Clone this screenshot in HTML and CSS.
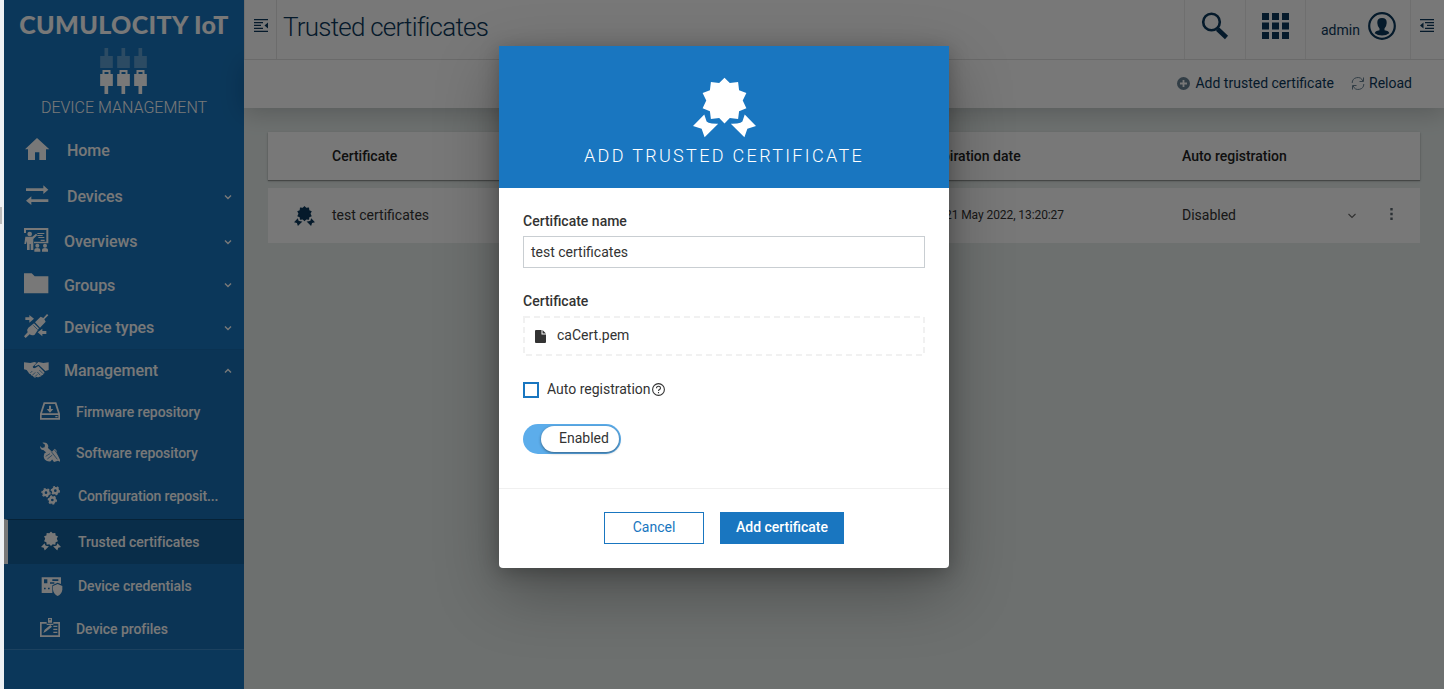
FILE: index.html
```html
<!DOCTYPE html>
<html lang="en">
<head>
<meta charset="utf-8">
<title>Trusted certificates</title>
<link rel="stylesheet" href="styles.css">
</head>
<body>
<svg class="defs" width="0" height="0">
  <symbol id="badge" viewBox="580 110 190 182">
    <path d="M675 111l16 16 25-3 3 25 22 8-11 23 11 23-22 9-3 24-25-3-16 16-16-16-25 3-3-24-22-9 11-23-11-23 22-8 3-25 25 3z"/>
    <path d="M614 222l-34 35 26 8 9 26 41-41q-37 1-37-13zM736 222l34 35-26 8-9 26-41-41q37 1 37-13z"/>
  </symbol>
  <symbol id="down" viewBox="0 0 8 8"><path d="M1 2.5l3 3 3-3" fill="none" stroke="currentColor" stroke-width="1.4"/></symbol>
</svg>
<div class="app">
  <aside class="edge"><span class="edge-mark"></span></aside>
  <nav class="sidebar">
    <div class="brand">
      <div class="brand-name">CUMULOCITY IoT</div>
      <svg class="plugs" viewBox="303 144 140 138">
        <path opacity=".3" d="M316 144h11v24h14v36h-38v-36h13zM367 144h11v24h14v36h-38v-36h13zM418 144h11v24h14v36h-38v-36h13z"/>
        <path fill-rule="evenodd" d="M310 210h24v12h7v36h-14v24h-11v-24h-13v-36h7zm6 6v6h12v-6zM361 210h24v12h7v36h-14v24h-11v-24h-13v-36h7zm6 6v6h12v-6zM412 210h24v12h7v36h-14v24h-11v-24h-13v-36h7zm6 6v6h12v-6z"/>
      </svg>
      <div class="brand-app">DEVICE MANAGEMENT</div>
    </div>
    <a class="item h46 wide"><svg class="ico" viewBox="66 411 84 84"><path d="M111 414l37 34h-10v32h-20v-23h-13v23H84v-32h-9z"/></svg><span>Home</span></a>
    <a class="item h46 wide"><svg class="ico" viewBox="66 39 84 84"><path d="M78 55h52v-9l15 13-15 13v-9H78zM145 88H94v-9L78 92l16 13v-9h51z"/></svg><span>Devices</span><svg class="chev"><use href="#down"/></svg></a>
    <a class="item h44"><svg class="ico" viewBox="66 174 84 84"><path d="M72 174h73v46h-43v-5h37v-35H78v9h-6z"/><circle cx="89" cy="192" r="7"/><path d="M76 200h21l11-9 4 4-12 12v33h-8v-18h-3v18h-8v-27l-3 9h-5zM112 189h21v3h-21zM112 195h16v3h-16zM115 201h18v3h-18zM122 209h12v4h-12z"/><circle cx="112" cy="227" r="6"/><circle cx="135" cy="227" r="6"/><path d="M103 245v-5q0-6 9-6t9 6v5zM126 245v-5q0-6 9-6t9 6v5z"/></svg><span>Overviews</span><svg class="chev"><use href="#down"/></svg></a>
    <a class="item h43"><svg class="ico" viewBox="66 305 84 84"><path d="M72 309h23l9 9h41v51H72z"/></svg><span>Groups</span><svg class="chev"><use href="#down"/></svg></a>
    <a class="item h42"><svg class="ico" viewBox="66 432 84 84"><path d="M76 442h12v-7l14 11-14 12v-8H76zM139 483h-12v-7l-14 11 14 12v-7h12zM141 432l4 4-12 12 4 7-17 18-15-16 17-17 8 4zM102 460l15 15-13 19q-8 4-15-1l-12 11-5-5 11-12q-4-8 2-14z"/><path class="cut" d="M100 466l13 13"/></svg><span>Device types</span><svg class="chev"><use href="#down"/></svg></a>
    <div class="open">
      <a class="item h43"><svg class="ico" viewBox="66 34 84 84"><path d="M72 50l19 2 12-3 7 2-12 12q1 7 9 3l8-5 18 18q2 5-3 5 1 5-5 5-1 5-7 4-4 4-8 0l-5 3q-5-1-6-5-6 0-7-5-6-1-7-6l-5-7-8-2zM146 50v23l-10 3-20-19-10 5q-4-1 0-5l9-8 15 3z"/><path class="cut" d="M91 82l6-6M97 89l9-9M105 93l7-7M118 73l11 11M112 79l9 10"/></svg><span>Management</span><svg class="chev up"><use href="#down"/></svg></a>
      <a class="item sub h41"><svg class="ico" viewBox="114 160 84 84"><path fill-rule="evenodd" d="M131 170h38l11 34v18h-60v-18zm4 5l-9 28h48l-9-28zM125 208v9h50v-9z"/><path d="M147 180h6v10h7l-10 11-10-11h7zM166 211h7v4h-7z"/></svg><span>Firmware repository</span></a>
      <a class="item sub h41"><svg class="ico" viewBox="114 283 84 84"><path d="M127 291q15-2 18 10l-1 6 12 11 8-9 5 5 3 12 8 16v6l-6-3-12 4-17-23-15-13q-9 1-10-12l6 6 8-2 1-8zM134 322l9-3 17 18-8 10q-10 2-17-5-7-8-1-20z"/><path class="cut" d="M137 332l13-8M142 340l15-12M154 318l18 23M163 312l11 15"/></svg><span>Software repository</span></a>
      <a class="item sub shift h45"><svg class="ico" viewBox="114 412 84 84"><g fill="none" stroke="currentColor"><g stroke-width="7"><circle cx="138" cy="441" r="7.5"/><circle cx="166" cy="435" r="7.5"/><circle cx="157" cy="463" r="7.5"/></g><g stroke-width="4" stroke-dasharray="6 6"><circle cx="138" cy="441" r="12"/><circle cx="166" cy="435" r="12"/><circle cx="157" cy="463" r="12"/></g></g></svg><span class="tight">Configuration reposit...</span></a>
      <a class="item sub shift active h45"><svg class="ico" viewBox="114 52 84 84"><use href="#badge" x="123" y="62" width="60" height="58"/></svg><span>Trusted certificates</span></a>
      <a class="item sub shift h44"><svg class="ico" viewBox="114 186 84 84"><path fill-rule="evenodd" d="M125 202h58v20l-10-4-16 8v23h-32zm7 6v12h10v-12zm25 0v5h18v-5zM132 233v5h5v-5zM144 233v5h5v-5zM150 217v4h13v-4z"/><path d="M173 222l14 6v11q-2 13-14 19-12-6-14-19v-11z"/></svg><span>Device credentials</span></a>
      <a class="item sub h42"><svg class="ico" viewBox="114 315 84 84"><path fill-rule="evenodd" d="M120 336h20v5h-15v35h50v-35h-15v-5h20v45h-60zM144 324h12v14h-12zm4 3v4h4v-4zM140 341h20v4h-20zM160 347h12v4h-12zM160 356h12v4h-12zM160 365h12v4h-12zM130 369l4-10 17-14 5 5-17 14z"/></svg><span>Device profiles</span></a>
    </div>
  </nav>
  <main class="main">
    <header class="topbar">
      <div class="cell toggle"><svg width="14" height="13" viewBox="0 0 14 13"><path d="M0 0h14v1.3H0zM0 3h9v1.2H0zM0 5.8h7v1.2H0zM0 8.800h9V10H0zM0 11.700h14V13H0zM14 3.500v6l-3.500-3z"/></svg></div>
      <h1 class="title">Trusted certificates</h1>
      <div class="cell search"><svg width="28" height="28" viewBox="0 0 28 28"><circle cx="10.500" cy="10" r="8.300" fill="none" stroke="currentColor" stroke-width="2.600"/><path d="M16.500 17l9 8.500" stroke="currentColor" stroke-width="4.500"/></svg></div>
      <div class="cell apps"><svg width="27" height="26" viewBox="0 0 27 26"><path d="M0 0h7v7H0zM10 0h7v7h-7zM20 0h7v7h-7zM0 9.500h7v7H0zM10 9.500h7v7h-7zM20 9.500h7v7h-7zM0 19h7v7H0zM10 19h7v7h-7zM20 19h7v7h-7z"/></svg></div>
      <div class="cell user"><span class="user-name">admin</span><svg width="28" height="28" viewBox="0 0 28 28"><circle cx="14" cy="14" r="12.800" fill="none" stroke="currentColor" stroke-width="2.200"/><path d="M14 6q5 0 4.700 5-.3 4-2.200 5.500v1.700q4.500.7 4.800 3-3 2.300-7.300 2.300t-7.300-2.300q.3-2.300 4.800-3v-1.700Q9.600 15 9.300 11 9 6 14 6z"/></svg></div>
      <div class="cell drawer"><svg width="14" height="13" viewBox="0 0 14 13"><path d="M0 0h14v1.200H0zM5 3h9v1.200H5zM7 5.800h7V7H7zM5 8.800h9V10H5zM0 11.700h14V13H0zM0 6.500l3.500-3v6z"/></svg></div>
    </header>
    <div class="actions">
      <a class="action add"><svg width="13" height="13" viewBox="0 0 13 13"><path fill-rule="evenodd" d="M6.500 0a6.500 6.500 0 100 13 6.500 6.500 0 000-13zM5.600 3h1.800v2.600H10v1.800H7.400V10H5.600V7.400H3V5.600h2.600z"/></svg><span>Add trusted certificate</span></a>
      <a class="action reload"><svg width="14" height="13" viewBox="0 0 14 13"><path d="M1.200 6A5.500 5.500 0 0111.800 4M12.800 7a5.500 5.500 0 01-10.600 2M12.500.5V4.500h-4M1.500 12.500v-4h4" fill="none" stroke="currentColor"/></svg><span>Reload</span></a>
    </div>
    <section class="table">
      <div class="row head"><span></span><span>Certificate</span><span>Expiration date</span><span>Auto registration</span></div>
      <div class="row data"><svg class="cert-ico"><use href="#badge"/></svg><span>test certificates</span><span class="date">21 May 2022, 13:20:27</span><span>Disabled</span><svg class="row-chev" viewBox="0 0 8 8"><path d="M.5 2l3.500 3.500L7.500 2" fill="none" stroke="currentColor" stroke-width="1.100"/></svg><svg class="dots" viewBox="0 0 3 12"><path d="M.3 0h2.400v2.400H.3zM.3 4.800h2.400v2.400H.3zM.3 9.600h2.400V12H.3z"/></svg></div>
    </section>
  </main>
</div>
<div class="backdrop">
  <div class="modal">
    <header class="modal-head">
      <svg class="modal-ico"><use href="#badge"/></svg>
      <h2 class="modal-title">ADD TRUSTED CERTIFICATE</h2>
    </header>
    <div class="modal-body">
      <label class="label">Certificate name</label>
      <div class="input">test certificates</div>
      <label class="label second">Certificate</label>
      <div class="drop"><svg class="dash"><rect x="1" y="1" width="400" height="38" fill="none" stroke="#f1f1f1" stroke-width="2" stroke-dasharray="6 4"/></svg><svg class="file" width="11" height="13" viewBox="0 0 11 13"><path d="M1 0h5.500v4.500H11V12q0 1-1 1H1q-1 0-1-1V1q0-1 1-1zM7.500 0L11 3.500H7.500z"/></svg><span>caCert.pem</span></div>
      <div class="check"><span class="box"></span><span>Auto registration</span><svg class="help" width="13" height="13" viewBox="0 0 13 13"><circle cx="6.500" cy="6.500" r="5.900"/><path d="M4.500 5.200q0-2 2-2t2 1.800q0 1-1 1.500t-1 1.500M6.500 9v1.200"/></svg></div>
      <div class="switch"><span class="knob">Enabled</span></div>
    </div>
    <footer class="modal-foot"><button class="btn">Cancel</button><button class="btn primary">Add certificate</button></footer>
  </div>
</div>
</body>
</html>
```
FILE: styles.css
```css
* { box-sizing: border-box; }
body { margin: 0; width: 1444px; height: 689px; overflow: hidden; position: relative; font: 14px/20px Roboto, "Liberation Sans", sans-serif; color: #333; }
svg { display: block; fill: currentColor; flex: none; }
.defs { position: absolute; }
h1, h2 { margin: 0; }
.app { display: flex; height: 689px; }
.edge { width: 4px; background: #eef1f4; padding-top: 207px; }
.edge-mark { display: block; width: 2px; height: 17px; background: #bbb; }

.sidebar { width: 240px; background: #1976bf; color: #fff; }
.brand { height: 128px; display: flex; flex-direction: column; align-items: center; }
.brand-name { font: 900 25px/30px Lato, sans-serif; letter-spacing: .35px; margin-top: 9px; white-space: nowrap; }
.plugs { width: 47px; height: 46px; margin-top: 9px; margin-right: 1px; }
.brand-app { font-size: 16px; font-weight: 300; line-height: 20px; margin-top: 4px; }
.item { display: flex; align-items: center; padding-left: 18px; padding-right: 12px; font-size: 16px; font-weight: 500; letter-spacing: -.04px; }
.item > span { flex: 1; margin-left: 14px; white-space: nowrap; }
.item.wide > span { margin-left: 17px; }
.ico { width: 28px; height: 28px; overflow: visible; }
.chev { width: 8px; height: 8px; margin-bottom: 1px; }
.chev.up { transform: rotate(180deg); margin: 1px 0 0; }
.cut { fill: none; stroke: #1870b5; stroke-width: 2; }
.h41 { height: 41px; } .h42 { height: 42px; } .h43 { height: 43px; }
.h44 { height: 44px; } .h45 { height: 45px; } .h46 { height: 46px; }
.open { background: #1870b5; border-bottom: 1px solid #3d8bca; height: 301px; box-shadow: inset 0 1px #166aae; }
.sub { padding-left: 34px; font-size: 14px; letter-spacing: -.06px; }
.sub > span { margin-left: 10px; }
.sub.h41 > span, .sub.h45 > span { padding-bottom: 1px; }
.sub.shift > span { margin-left: 12px; }
.sub > .tight { letter-spacing: -.16px; }
.active { background: #14609b; border-left: 4px solid #fff; border-top: 1px solid #0e4876; padding-left: 30px; }

.main { width: 1200px; background: #e7eeec; }
.topbar { height: 60px; display: flex; background: #fff; border-bottom: 1px solid #e2e2e2; color: #0b385b; position: relative; }
.cell { display: flex; align-items: center; border-left: 1px solid #ebebeb; }
.toggle { width: 33px; border-right: 1px solid #e5e5e5; padding: 0 0 8px 9px; }
.title { flex: 1; font-size: 26px; font-weight: 300; letter-spacing: -.78px; line-height: 54px; padding-left: 6px; }
.search { width: 61px; padding: 0 0 7px 16px; }
.apps { width: 60px; padding: 0 0 7px 16px; }
.user { width: 105px; padding: 0 0 7px 15px; }
.user-name { flex: 1; padding-top: 7px; }
.user svg { margin-right: 14px; }
.drawer { width: 34px; padding: 0 0 8px 9px; }
.actions { height: 48px; display: flex; align-items: center; justify-content: flex-end; background: #fff; padding: 0 32px 2px 0; color: #0b385b; box-shadow: 0 4px 24px rgba(0,0,0,.2); }
.action { display: flex; align-items: center; }
.action svg { color: #6b8496; margin-right: 5px; }
.reload { margin-left: 17px; }
.reload svg { margin-right: 4px; }
.table { padding: 24px 24px 0; }
.row { display: grid; grid-template-columns: 64px 595px 255px 166px 36px 36px; align-items: center; background: #fff; }
.row > span { padding-bottom: 1px; }
.head { height: 48px; font-weight: 500; color: #222; box-shadow: 0 1px 1px rgba(0,0,0,.3), 0 1px 3px rgba(0,0,0,.15); }
.data { height: 55px; margin-top: 8px; }
.date { font-size: 12px; padding-left: 18px; letter-spacing: -.08px; }
.cert-ico { width: 21px; height: 20px; margin-left: 26px; color: #0b385b; }
.row-chev { width: 8px; height: 8px; color: #666; }
.dots { width: 3px; height: 12px; margin: 0 0 4px 6px; color: #5a6670; }

.backdrop { position: absolute; left: 4px; top: 0; right: 0; bottom: 0; background: rgba(0,0,0,.53); }
.modal { width: 450px; height: 522px; margin: 46px 0 0 495px; background: #fff; border-radius: 0 0 4px 4px; box-shadow: 0 24px 64px rgba(0,0,0,.3), 0 4px 20px rgba(0,0,0,.25); }
.backdrop::before { content: ""; display: table; }
.modal-head { height: 142px; background: #1976c0; color: #fff; display: flex; flex-direction: column; align-items: center; padding-top: 31px; }
.modal-ico { width: 63px; height: 61px; }
.modal-title { font-size: 18px; font-weight: 300; letter-spacing: 2.32px; line-height: 24px; margin-top: 6px; }
.modal-body { height: 300px; padding: 23px 24px 0; }
.label { display: block; font-weight: 500; }
.input { height: 32px; margin-top: 5px; padding: 5px 7px; border: 1px solid #c9ced2; }
.second { margin-top: 23px; }
.drop { position: relative; height: 40px; margin-top: 5px; display: flex; align-items: center; padding: 0 0 2px 12px; }
.dash { position: absolute; left: 0; top: 0; width: 402px; height: 40px; }
.file { margin: 3px 11px 0 0; }
.check { display: flex; align-items: center; height: 20px; margin-top: 23px; }
.box { width: 16px; height: 16px; border: 2px solid #1976c0; margin: 1px 8px 0 0; }
.help { fill: none; stroke: currentColor; stroke-width: 1.1; margin-left: 1px; }
.switch { width: 98px; height: 30px; margin-top: 25px; padding: 2px 2px 2px 18px; border-radius: 15px; background: #5cadeb; }
.knob { display: block; height: 26px; padding-left: 18px; line-height: 25px; border-radius: 13px; background: #fff; box-shadow: 0 1px 3px rgba(0,0,0,.45); }
.modal-foot { display: flex; gap: 16px; border-top: 1px solid #f0f0f0; padding: 23px 0 0 105px; }
.btn { width: 100px; height: 32px; padding: 0 0 2px; border: 1px solid #1976c0; background: #fff; color: #1976c0; font: 14px Roboto, sans-serif; }
.primary { width: 124px; background: #1976c0; color: #fff; font-weight: 500; }
```
